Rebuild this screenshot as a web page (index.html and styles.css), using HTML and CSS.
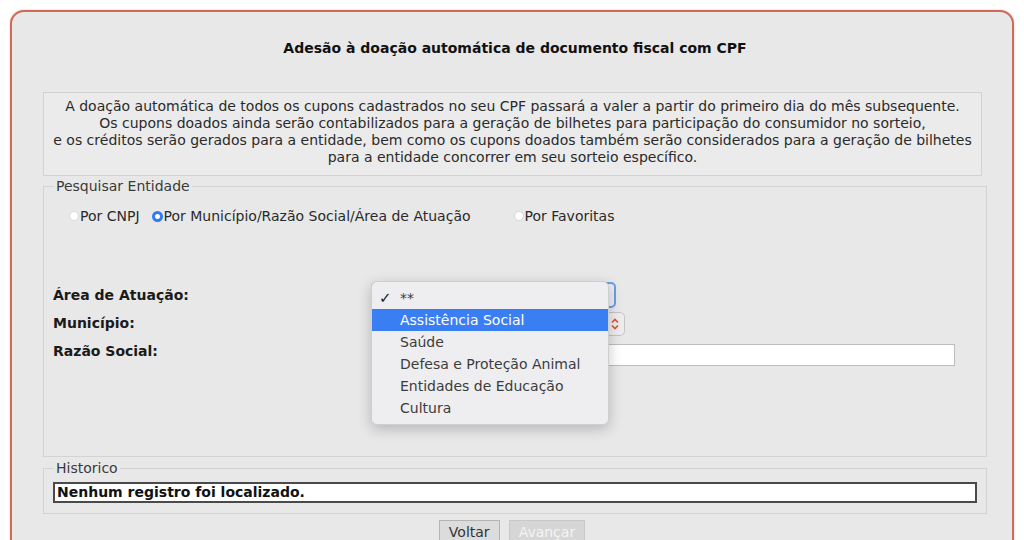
FILE: index.html
```html
<!DOCTYPE html>
<html lang="pt-BR">
<head>
<meta charset="utf-8">
<title>Adesão à doação automática</title>
<link rel="stylesheet" href="styles.css">
</head>
<body>
<div class="card">
  <h1 class="titulo">Adesão à doação automática de documento fiscal com CPF</h1>

  <div class="aviso">
    A doação automática de todos os cupons cadastrados no seu CPF passará a valer a partir do primeiro dia do mês subsequente.<br>
    Os cupons doados ainda serão contabilizados para a geração de bilhetes para participação do consumidor no sorteio,<br>
    e os créditos serão gerados para a entidade, bem como os cupons doados também serão considerados para a geração de bilhetes<br>
    para a entidade concorrer em seu sorteio específico.
  </div>

  <fieldset class="grupo grupo-pesquisa">
    <legend>Pesquisar Entidade</legend>
    <div class="radios">
      <span class="radio"></span><span class="radio-label">Por CNPJ</span>
      <span class="radio checked"></span><span class="radio-label">Por Município/Razão Social/Área de Atuação</span>
      <span class="radio radio-fav"></span><span class="radio-label">Por Favoritas</span>
    </div>

    <div class="form">
      <div class="rotulo">Área de Atuação:</div>
      <div class="campo">
        <div class="select select-area"></div>
        <ul class="popup">
          <li class="opcao marcada"><span class="check">✓</span>**</li>
          <li class="opcao ativa">Assistência Social</li>
          <li class="opcao">Saúde</li>
          <li class="opcao">Defesa e Proteção Animal</li>
          <li class="opcao">Entidades de Educação</li>
          <li class="opcao">Cultura</li>
        </ul>
      </div>

      <div class="rotulo">Município:</div>
      <div class="campo">
        <div class="select select-mun">
          <svg class="setas" width="8" height="12" viewBox="0 0 8 12"><path d="M1 4.5 L4 1.5 L7 4.5 M1 7.5 L4 10.5 L7 7.5" fill="none" stroke="#d9542f" stroke-width="1.6"/></svg>
        </div>
      </div>

      <div class="rotulo">Razão Social:</div>
      <div class="campo">
        <div class="texto"></div>
      </div>
    </div>
  </fieldset>

  <fieldset class="grupo grupo-hist">
    <legend>Historico</legend>
    <div class="resultado">Nenhum registro foi localizado.</div>
  </fieldset>

  <div class="botoes">
    <span class="botao">Voltar</span>
    <span class="botao desabilitado">Avançar</span>
  </div>
</div>
</body>
</html>
```

FILE: styles.css
```css
html, body {
    margin: 0;
    padding: 0;
    background: #fff;
    overflow: hidden;
}

body {
    font-family: "DejaVu Sans", Verdana, sans-serif;
    font-size: 14px;
    color: #222;
}

.card {
    margin: 10px 10px 0 10px;
    border: 2px solid #cf6b5d;
    border-radius: 14px;
    background: #e8e8e8;
    padding: 26px 25px 60px 31px;
    box-shadow: 0 0 2px rgba(207, 107, 93, 0.5);
}

.titulo {
    margin: 0 0 34px 0;
    font-size: 14px;
    line-height: 20px;
    font-weight: bold;
    text-align: center;
    color: #111;
}

.aviso {
    margin-right: 5px;
    border: 1px solid #d2d2d2;
    background: #ebebeb;
    padding: 5px 2px 9px 2px;
    line-height: 17px;
    text-align: center;
    color: #2a2a2a;
}

.grupo {
    margin: 2px 0 0 0;
    border: 1px solid #d3d3d3;
    padding: 0 9px;
    min-width: 0;
}

.grupo legend {
    padding: 0 2px;
    margin-left: 1px;
    line-height: 17px;
    color: #3a3a3a;
}

/* radios */
.radios {
    display: flex;
    align-items: center;
    margin-top: 12px;
    height: 18px;
    padding-left: 16px;
    color: #2a2a2a;
}

.radio {
    width: 10px;
    height: 10px;
    border-radius: 50%;
    background: #fff;
    border: 1px solid #d8d8d8;
    box-sizing: border-box;
    flex: none;
}

.radio.checked {
    background: #fff;
    border: 3px solid #2f7cf2;
    width: 11px;
    height: 11px;
    margin-left: 12px;
}

.radio-fav {
    margin-left: 43px;
}

.radio-label {
    margin-left: 1px;
}

/* formulario */
.form {
    display: grid;
    grid-template-columns: 318px 1fr;
    grid-auto-rows: 28px;
    margin-top: 56px;
    margin-bottom: 91px;
}

.rotulo {
    font-weight: bold;
    display: flex;
    align-items: center;
    color: #1a1a1a;
}

.campo {
    position: relative;
    display: flex;
    align-items: center;
}

.select {
    box-sizing: border-box;
    border-radius: 5px;
}

.select-area {
    width: 245px;
    height: 26px;
    border: 2px solid #6f9ce3;
    background: #e9edf5;
}

.select-mun {
    width: 254px;
    height: 24px;
    margin-top: 2px;
    border: 1px solid #c4c4c4;
    background: #ededed;
    display: flex;
    align-items: center;
    justify-content: flex-end;
    padding-right: 5px;
}

.texto {
    width: 584px;
    height: 22px;
    margin-top: 8px;
    box-sizing: border-box;
    border: 1px solid #bdbdbd;
    background: #fff;
}

/* lista aberta do select */
.popup {
    position: absolute;
    left: 0;
    top: 0;
    z-index: 10;
    width: 238px;
    box-sizing: border-box;
    margin: 0;
    padding: 5px 0 5px 0;
    list-style: none;
    background: #eeeef0;
    border: 1px solid #cfcfd2;
    border-radius: 6px;
    box-shadow: 0 4px 14px rgba(0, 0, 0, 0.22);
}

.opcao {
    position: relative;
    height: 22px;
    line-height: 22px;
    padding-left: 28px;
    color: #3c3c3c;
}

.opcao.ativa {
    background: #3a7ef3;
    color: #fff;
}

.check {
    position: absolute;
    left: 7px;
    color: #222;
    font-size: 15px;
}

/* historico */
.grupo-hist {
    margin-top: 3px;
    padding-bottom: 10px;
}

.resultado {
    margin-top: 5px;
    height: 21px;
    box-sizing: border-box;
    border: 2px solid #4a4a4a;
    background: #fff;
    padding-left: 2px;
    line-height: 17px;
    font-weight: bold;
    color: #111;
}

.botoes {
    display: flex;
    justify-content: center;
    gap: 9px;
    margin-top: 6px;
    margin-right: 6px;
}

.botao {
    display: inline-block;
    height: 22px;
    line-height: 22px;
    padding: 0 9px;
    border: 1px solid #b4b4b4;
    background: #dcdcdc;
    color: #333;
}

.botao.desabilitado {
    color: #f4f4f4;
    background: #d6d6d6;
    border-color: #c8c8c8;
}
```
